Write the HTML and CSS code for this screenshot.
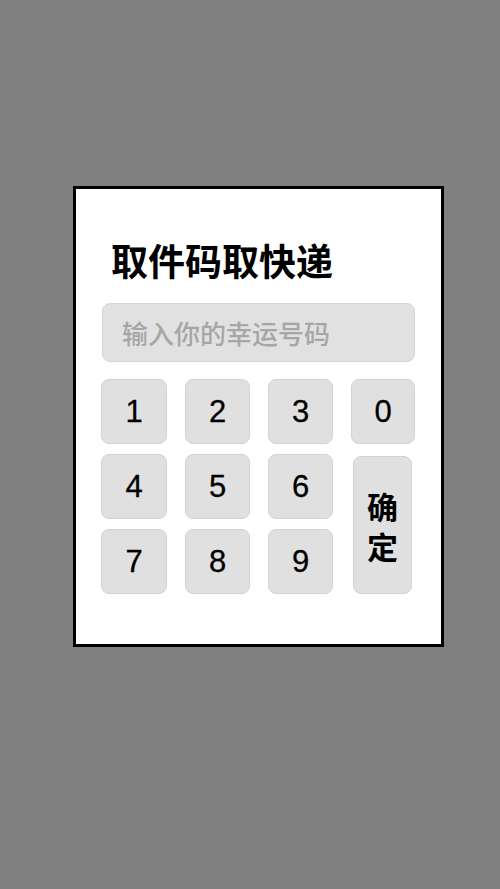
FILE: index.html
```html
<!DOCTYPE html>
<html lang="zh-CN">
<head>
  <meta charset="UTF-8">
  <meta name="viewport" content="width=device-width, initial-scale=1.0">
  <title>取件码取快递</title>
  <link rel="stylesheet" href="styles.css">
</head>
<body>
  <div class="dialog">
    <h1 class="title">取件码取快递</h1>
    <input type="text" class="code-input" id="codeInput" placeholder="输入你的幸运号码">
    <div class="keypad">
      <button class="key">1</button>
      <button class="key">2</button>
      <button class="key">3</button>
      <button class="key">0</button>
      <button class="key">4</button>
      <button class="key">5</button>
      <button class="key">6</button>
      <button class="key confirm"><span>确</span><span>定</span></button>
      <button class="key">7</button>
      <button class="key">8</button>
      <button class="key">9</button>
    </div>
  </div>
</body>
</html>
```

FILE: styles.css
```css
body {
  margin: 0;
  padding: 0;
  min-height: 100vh;
  background-color: #808080;
  font-family: "Liberation Sans", "Noto Sans CJK SC", sans-serif;
  overflow: hidden;
}
.dialog {
  box-sizing: border-box;
  width: 371px;
  height: 461px;
  margin: 186px 0 0 73px;
  padding: 0 26px 0 25px;
  background: #fff;
  border: 3px solid #000;
}
.title {
  margin: 53px 0 24px 10px;
  font-family: "Noto Sans CJK SC", sans-serif;
  font-size: 37px;
  font-weight: 700;
  line-height: 37px;
  color: #000;
}
.code-input {
  display: block;
  box-sizing: border-box;
  width: 313px;
  height: 59px;
  margin: 0 0 17px 1px;
  padding: 0 0 0 19px;
  background: #e1e1e1;
  border: 1px solid #d5d5d5;
  border-radius: 8px;
  font-family: "Noto Sans CJK SC", sans-serif;
  font-size: 26px;
  font-weight: 500;
  outline: none;
}
.code-input::placeholder { color: #a6a6a6; }
.keypad {
  display: grid;
  grid-template-columns: 66px 65px 65px 64px;
  grid-template-rows: repeat(3, 65px);
  column-gap: 18px;
  row-gap: 10px;
}
.key {
  padding: 0;
  background: #e0e0e0;
  border: 1px solid #d3d3d3;
  border-radius: 8px;
  font-family: "Liberation Sans", sans-serif;
  font-size: 31px;
  color: #000;
  -webkit-text-stroke: 0.3px #000;
}
.key.confirm {
  grid-column: 4;
  grid-row: 2 / span 2;
  margin: 2px 3px 0 2px;
  display: flex;
  flex-direction: column;
  align-items: center;
  justify-content: center;
  gap: 9px;
  font-family: "Noto Sans CJK SC", sans-serif;
  font-weight: 700;
  -webkit-text-stroke: 0;
}
.key.confirm span { line-height: 31px; }
```
